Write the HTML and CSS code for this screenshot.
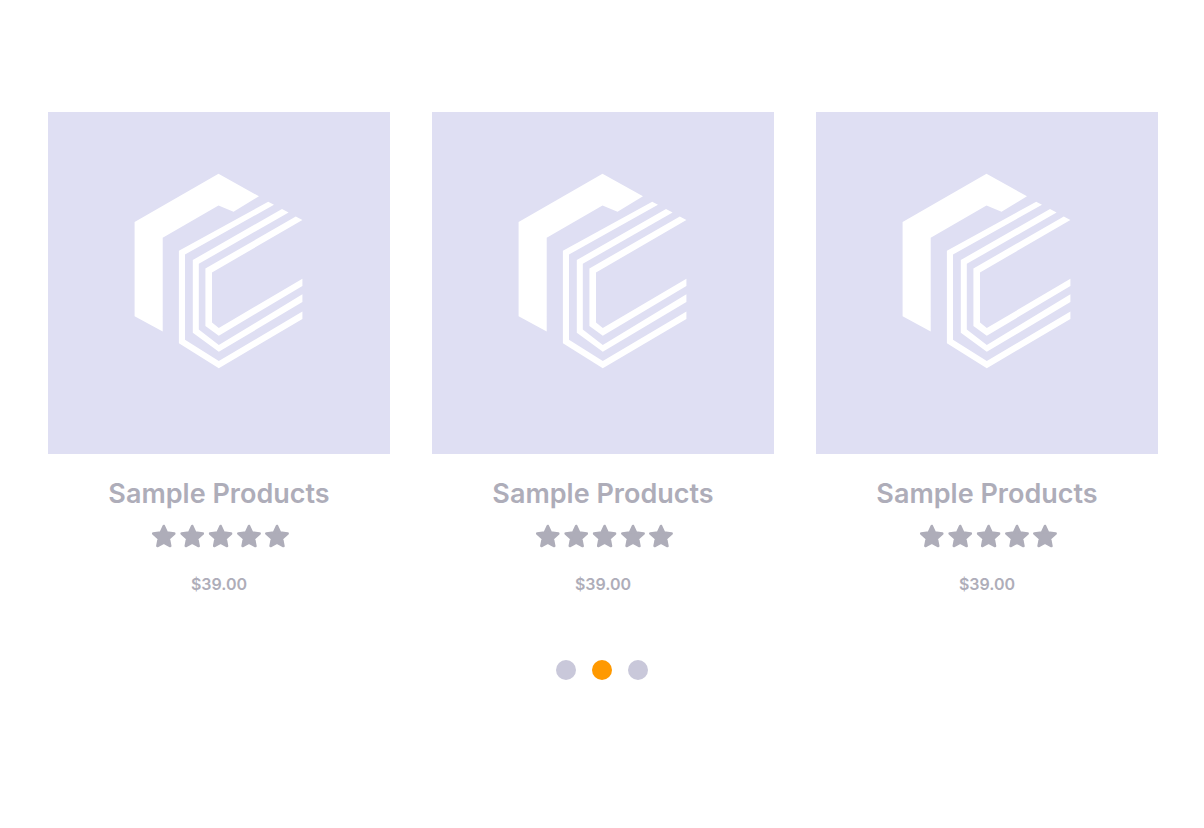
FILE: index.html
```html
<!DOCTYPE html>
<html lang="en">
<head>
<meta charset="utf-8">
<meta name="viewport" content="width=device-width, initial-scale=1">
<title>Sample Products</title>
<link rel="stylesheet" href="styles.css">
</head>
<body>
<svg class="defs" aria-hidden="true">
  <symbol id="logo" viewBox="48 112 342 342">
    <path d="M218.500 173.700 259 196.300 233.500 211.700 218.500 205.500 162.700 237.700V331.500L134.600 316.200V222Z"/>
    <path d="M268.200 201.700 274 204.700 185 254.500V339.700L218.800 361 302.400 311.500V319L218.800 368.200 178.900 343.200V250.700Z"/>
    <path d="M282 209 288.600 212.500 198.800 263.800V329.500L218.800 345 302.400 294.300V302L218.800 351.800 192.800 332.800V260Z"/>
    <path d="M295.800 216.500 302.400 220 212 272.500V322.500L218.800 328 302.400 278.800V286L218.800 335.700 205.400 326V268.500Z"/>
  </symbol>
  <symbol id="star" viewBox="0 0 24 24">
    <path d="M12 2 15 8.500 22.600 9.500 17 14.600 18.400 22 12 18.600 5.600 22 7 14.600 1.400 9.500 9 8.500Z" stroke="currentColor" stroke-width="2.600" stroke-linejoin="round"/>
  </symbol>
  <symbol id="stars" viewBox="0 0 140 24">
    <use href="#star" x="2.800" width="24" height="24"/>
    <use href="#star" x="31.200" width="24" height="24"/>
    <use href="#star" x="59.600" width="24" height="24"/>
    <use href="#star" x="88" width="24" height="24"/>
    <use href="#star" x="116" width="24" height="24"/>
  </symbol>
</svg>
<main class="carousel">
  <div class="products">
    <article class="product">
      <svg class="product-image" viewBox="0 0 342 342" aria-hidden="true"><use href="#logo"/></svg>
      <h2 class="product-name">Sample Products</h2>
      <svg class="rating" viewBox="0 0 140 24" role="img" aria-label="5 out of 5 stars"><use href="#stars"/></svg>
      <p class="price">$39.00</p>
    </article>
    <article class="product">
      <svg class="product-image" viewBox="0 0 342 342" aria-hidden="true"><use href="#logo"/></svg>
      <h2 class="product-name">Sample Products</h2>
      <svg class="rating" viewBox="0 0 140 24" role="img" aria-label="5 out of 5 stars"><use href="#stars"/></svg>
      <p class="price">$39.00</p>
    </article>
    <article class="product">
      <svg class="product-image" viewBox="0 0 342 342" aria-hidden="true"><use href="#logo"/></svg>
      <h2 class="product-name">Sample Products</h2>
      <svg class="rating" viewBox="0 0 140 24" role="img" aria-label="5 out of 5 stars"><use href="#stars"/></svg>
      <p class="price">$39.00</p>
    </article>
  </div>
  <nav class="dots" aria-label="Slides">
    <button class="dot" type="button" aria-label="Slide 1"></button>
    <button class="dot dot-active" type="button" aria-label="Slide 2" aria-current="true"></button>
    <button class="dot" type="button" aria-label="Slide 3"></button>
  </nav>
</main>
</body>
</html>
```
FILE: styles.css
```css
* {
  box-sizing: border-box;
}

body {
  margin: 0;
  background: #fff;
  color: #aeadb9;
  font-family: Inter, "Liberation Sans", sans-serif;
}

.defs {
  display: none;
}

.carousel {
  padding: 112px 0;
}

.products {
  display: grid;
  grid-template-columns: repeat(3, 1fr);
  gap: 42px;
  padding: 0 46px 0 48px;
}

.product {
  display: flex;
  flex-direction: column;
  align-items: center;
}

.product-image {
  display: block;
  width: 100%;
  aspect-ratio: 1;
  background: #dfdff3;
  fill: #fff;
}

.product-name {
  margin: 22px 0 12px;
  font-size: 27px;
  font-weight: 600;
  line-height: 36px;
}

.rating {
  display: block;
  width: 140px;
  height: 24px;
  fill: currentColor;
}

.price {
  margin: 24px 0 0;
  font-size: 16px;
  font-weight: 600;
  line-height: 24px;
}

.dots {
  display: flex;
  justify-content: center;
  gap: 16px;
  margin-top: 64px;
}

.dot {
  width: 20px;
  height: 20px;
  padding: 0;
  border: 0;
  border-radius: 50%;
  background: #c9c8da;
}

.dot-active {
  background: #ff9900;
}
```
